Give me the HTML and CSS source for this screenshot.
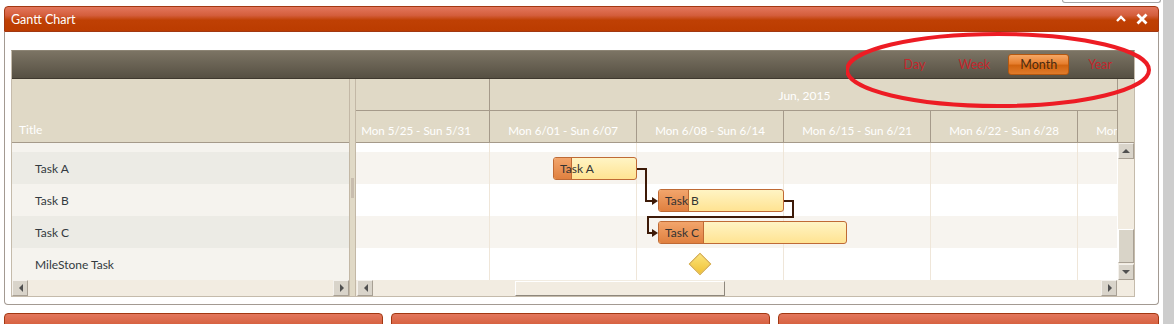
FILE: index.html
```html
<!DOCTYPE html>
<html lang="en">
<head>
  <meta charset="UTF-8" />
  <title>Gantt Chart</title>
  <link rel="stylesheet" href="styles.css">
</head>
<body>
  <div class="page">
    <div class="desk">
      <div class="peek"><div class="peek-box"></div></div>

      <div class="window">
        <div class="titlebar">
          <span class="title">Gantt Chart</span>
          <div class="title-tools">
            <svg width="12" height="10" viewBox="0 0 12 10"><path d="M2 7 L6 3 L10 7" fill="none" stroke="#fff" stroke-width="2.4"/></svg>
            <svg width="12" height="12" viewBox="0 0 12 12"><path d="M1.5 1.5 L10.5 10.5 M10.5 1.5 L1.5 10.5" fill="none" stroke="#fff" stroke-width="2.8"/></svg>
          </div>
        </div>

        <div class="window-body">
          <div class="gantt">
            <div class="toolbar">
              <span class="view">Day</span>
              <span class="view">Week</span>
              <span class="view active">Month</span>
              <span class="view">Year</span>
            </div>

            <div class="gantt-main">
              <!-- left: task list -->
              <div class="left-pane">
                <div class="left-head">Title</div>
                <div class="left-rows">
                  <div class="lrow part"></div>
                  <div class="lrow alt">Task A</div>
                  <div class="lrow">Task B</div>
                  <div class="lrow alt">Task C</div>
                  <div class="lrow">MileStone Task</div>
                </div>
                <div class="hscroll">
                  <div class="sbtn left"></div>
                  <div class="track"></div>
                  <div class="sbtn right"></div>
                </div>
              </div>

              <div class="splitter"><div class="grip"></div></div>

              <!-- right: timeline -->
              <div class="right-pane">
                <div class="right-head">
                  <div class="head-cols">
                    <div class="hrow months">
                      <div class="hcell"></div>
                      <div class="hcell" style="width:630px">Jun, 2015</div>
                    </div>
                    <div class="hrow weeks">
                      <div class="hcell">Mon 5/25 - Sun 5/31</div>
                      <div class="hcell">Mon 6/01 - Sun 6/07</div>
                      <div class="hcell">Mon 6/08 - Sun 6/14</div>
                      <div class="hcell">Mon 6/15 - Sun 6/21</div>
                      <div class="hcell">Mon 6/22 - Sun 6/28</div>
                      <div class="hcell">Mon 6/29 - Sun 7/05</div>
                    </div>
                  </div>
                  <div class="head-corner"></div>
                </div>

                <div class="right-body">
                  <div class="chart">
                    <div class="crow part"></div>
                    <div class="crow">
                      <div class="bar" style="left:197px;width:84px">
                        <div class="progress" style="width:17px"></div>
                        <span class="bar-label">Task A</span>
                      </div>
                    </div>
                    <div class="crow">
                      <div class="bar" style="left:302px;width:126px">
                        <div class="progress" style="width:29px"></div>
                        <span class="bar-label">Task B</span>
                      </div>
                    </div>
                    <div class="crow">
                      <div class="bar" style="left:302px;width:189px">
                        <div class="progress" style="width:44px"></div>
                        <span class="bar-label">Task C</span>
                      </div>
                    </div>
                    <div class="crow">
                      <div class="milestone" style="left:336px"></div>
                    </div>

                    <svg class="links" width="761" height="137" viewBox="0 0 761 137">
                      <path d="M281 26 H290 V58 H297" fill="none" stroke="#3d1a08" stroke-width="2"/>
                      <path d="M296 54 L302 58 L296 62 Z" fill="#3d1a08"/>
                      <path d="M428 58 H437 V74 H292 V90 H297" fill="none" stroke="#3d1a08" stroke-width="2"/>
                      <path d="M296 86 L302 90 L296 94 Z" fill="#3d1a08"/>
                    </svg>
                  </div>

                  <div class="vscroll">
                    <div class="sbtn up"></div>
                    <div class="vtrack"><div class="vthumb"></div></div>
                    <div class="sbtn down"></div>
                  </div>
                </div>

                <div class="hscroll wide">
                  <div class="sbtn left"></div>
                  <div class="track"><div class="hthumb"></div></div>
                  <div class="sbtn right"></div>
                  <div class="corner"></div>
                </div>
              </div>
            </div>
          </div>
        </div>
      </div>

      <div class="panels">
        <div class="panel"></div>
        <div class="panel"></div>
        <div class="panel"></div>
      </div>
    </div>
    <div class="gutter"></div>

    <svg class="mark" width="320" height="90" viewBox="0 0 320 90">
      <ellipse cx="152" cy="39" rx="151" ry="36" fill="none" stroke="#ed1c24" stroke-width="4"/>
    </svg>
  </div>
</body>
</html>
```

FILE: styles.css
```css
body {
  margin: 0;
  background: #fff;
  font-family: Lato, "Open Sans", sans-serif;
  font-size: 12px;
  overflow: hidden;
}
.page {
  position: relative;
  display: flex;
  width: 1174px;
  height: 324px;
  overflow: hidden;
}
.desk {
  width: 1163px;
}
.gutter {
  width: 11px;
  background: #cdcdcd;
}
.peek {
  height: 6px;
}
.peek-box {
  margin-left: 1062px;
  width: 97px;
  height: 2px;
  border: 1px solid #a6a6a6;
  border-top: none;
  border-radius: 0 0 3px 3px;
}

/* window */
.window {
  margin-left: 4px;
  width: 1155px;
}
.titlebar {
  height: 26px;
  box-sizing: border-box;
  border: 1px solid #a23812;
  border-radius: 4px 4px 0 0;
  background: linear-gradient(#e3775d 0%, #d45e3c 35%, #bf4004 55%, #bb3c00 100%);
  display: flex;
  align-items: center;
  justify-content: space-between;
  padding: 0 10px 0 6px;
  color: #fff;
}
.title {
  font-size: 12.5px;
  padding-top: 1px;
}
.title-tools {
  display: flex;
  align-items: center;
  gap: 9px;
}
.window-body {
  border: 1px solid #a39a92;
  border-top: none;
  border-radius: 0 0 4px 4px;
  padding: 18px 23px 7px 6px;
}

/* gantt */
.gantt {
  width: 1124px;
  box-sizing: border-box;
  border: 1px solid #c5bbab;
  border-top-color: #8c8474;
}
.toolbar {
  height: 27px;
  border-bottom: 1px solid #3f392f;
  background: linear-gradient(#7c7464, #565043);
  display: flex;
  align-items: center;
  justify-content: flex-end;
  padding-right: 22px;
}
.view {
  color: #c4262c;
  font-size: 12.5px;
  margin-left: 33px;
}
.view.active {
  margin-left: 18px;
  margin-right: -2px;
  width: 61px;
  height: 21px;
  box-sizing: border-box;
  border: 1px solid #b5580f;
  border-radius: 3px;
  background: linear-gradient(#f5a866 0%, #e77f2f 45%, #d2640f 55%, #e07b2b 100%);
  color: #4a2a10;
  display: flex;
  align-items: center;
  justify-content: center;
}
.view.active + .view {
  margin-left: 21px;
}
.gantt-main {
  display: flex;
}

/* left pane */
.left-pane {
  width: 337px;
}
.left-head {
  height: 64px;
  box-sizing: border-box;
  border-bottom: 1px solid #a59a8a;
  background: #e0d9c6;
  color: #fff;
  padding: 43px 0 0 7px;
}
.lrow {
  height: 32px;
  box-sizing: border-box;
  line-height: 32px;
  padding: 1px 0 0 23px;
  background: #f5f3ee;
  color: #333a40;
}
.lrow.alt {
  background: #ecebe5;
}
.lrow.part {
  height: 9px;
}

/* scrollbars */
.hscroll {
  display: flex;
  height: 16px;
  background: #f2ece1;
}
.track {
  flex: 1;
  position: relative;
}
.sbtn {
  width: 16px;
  height: 16px;
  box-sizing: border-box;
  background: #d9d4ca;
  border: 1px solid;
  border-color: #f4f1ec #a8a094 #a8a094 #f4f1ec;
  position: relative;
}
.sbtn::after {
  content: "";
  position: absolute;
  width: 0;
  height: 0;
  border: 4px solid transparent;
}
.sbtn.left::after {
  left: 2px;
  top: 3px;
  border-right-color: #505050;
}
.sbtn.right::after {
  left: 6px;
  top: 3px;
  border-left-color: #505050;
}
.sbtn.up::after {
  left: 3px;
  top: 1px;
  border-bottom-color: #505050;
}
.sbtn.down::after {
  left: 3px;
  top: 5px;
  border-top-color: #505050;
}
.hscroll.wide {
  padding-left: 1px;
}
.hthumb {
  position: absolute;
  left: 142px;
  width: 210px;
  top: 1px;
  bottom: 0;
  box-sizing: border-box;
  border: 1px solid;
  border-color: #fff #8e877c #8e877c #fff;
  background: #f2ece1;
}
.corner {
  width: 17px;
}

.splitter {
  width: 7px;
  box-sizing: border-box;
  background: #e0d9c6;
  border-left: 1px solid #c3b8a6;
  border-right: 1px solid #c3b8a6;
  position: relative;
}
.grip {
  position: absolute;
  left: 1px;
  top: 99px;
  width: 3px;
  height: 20px;
  background: #c8bdae;
}

/* right pane */
.right-pane {
  width: 778px;
}
.right-head {
  display: flex;
  height: 64px;
  box-sizing: border-box;
  border-bottom: 1px solid #a59a8a;
  background: #e0d9c6;
}
.head-cols {
  width: 761px;
  overflow: hidden;
}
.head-corner {
  flex: 1;
  border-left: 1px solid #a59a8a;
}
.hrow {
  display: flex;
  white-space: nowrap;
  margin-left: -13px;
}
.months {
  height: 31px;
  border-bottom: 1px solid #a59a8a;
  margin-left: 0;
}
.months .hcell:first-child {
  width: 134px;
}
.weeks {
  height: 32px;
  font-size: 11.6px;
}
.hcell {
  flex: none;
  width: 147px;
  box-sizing: border-box;
  border-right: 1px solid #a59a8a;
  color: #fff;
  display: flex;
  align-items: center;
  justify-content: center;
  padding-top: 2px;
}
.weeks .hcell {
  padding-top: 6px;
}
.right-body {
  display: flex;
}
.chart {
  position: relative;
  width: 761px;
  background:
    repeating-linear-gradient(90deg, #efe6d9 0 1px, transparent 1px 147px) 133px 0 / 100% 100% no-repeat,
    repeating-linear-gradient(180deg, #f7f4ef 0 32px, #fff 32px 64px) 0 9px / 100% 100% no-repeat,
    #fff;
}
.crow {
  position: relative;
  height: 32px;
}
.crow.part {
  height: 9px;
}
.bar {
  position: absolute;
  top: 5px;
  height: 23px;
  box-sizing: border-box;
  border: 1px solid #bf6a35;
  border-radius: 3px;
  background: linear-gradient(#fff4c4, #ffe392);
  overflow: hidden;
  display: flex;
  align-items: center;
}
.progress {
  position: absolute;
  left: 0;
  top: 0;
  bottom: 0;
  background: linear-gradient(#f2a56c, #e0803f);
  border-right: 1px solid #bf6a35;
}
.bar-label {
  position: relative;
  padding-left: 6px;
  color: #333;
}
.milestone {
  position: absolute;
  top: 8px;
  width: 16px;
  height: 16px;
  box-sizing: border-box;
  border: 1px solid #cf9f2c;
  background: linear-gradient(135deg, #fbe37a, #f1c236);
  transform: rotate(45deg);
}
.links {
  position: absolute;
  left: 0;
  top: 0;
}
.vscroll {
  width: 17px;
  display: flex;
  flex-direction: column;
  background: #f2ece1;
  border-left: 1px solid #fff;
  box-sizing: border-box;
}
.vtrack {
  flex: 1;
  position: relative;
}
.vthumb {
  position: absolute;
  left: 0;
  right: 0;
  top: 70px;
  height: 34px;
  box-sizing: border-box;
  background: #d9d4c8;
  border: 1px solid;
  border-color: #fff #a8a094 #a8a094 #fff;
}

/* panels below */
.panels {
  display: flex;
  gap: 8px;
  margin: 8px 0 0 4px;
}
.panel {
  width: 379px;
  height: 14px;
  box-sizing: border-box;
  border: 1px solid #a23812;
  border-radius: 4px 4px 0 0;
  background: linear-gradient(#e3775d, #d45e3c);
}
.panel:last-child {
  width: 381px;
}

.mark {
  position: absolute;
  left: 846px;
  top: 31px;
}
```
